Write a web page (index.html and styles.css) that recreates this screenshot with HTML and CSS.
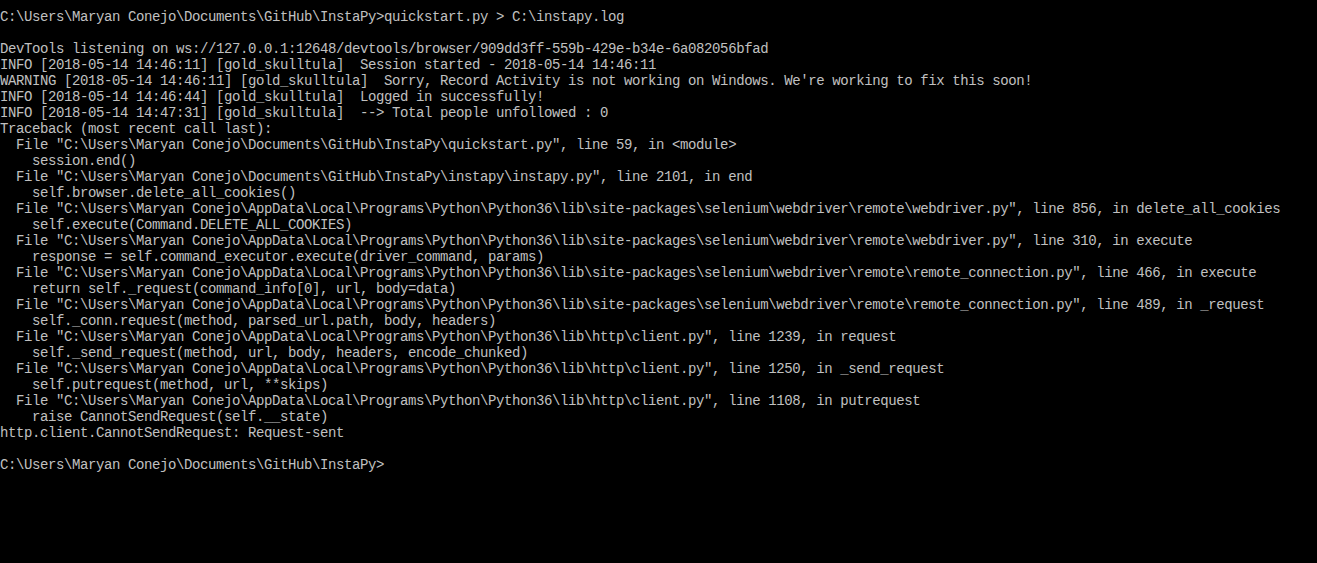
FILE: index.html
```html
<!DOCTYPE html>
<html>
<head>
<meta charset="utf-8">
<link rel="stylesheet" href="styles.css">
</head>
<body>
<pre class="console">C:\Users\Maryan Conejo\Documents\GitHub\InstaPy>quickstart.py > C:\instapy.log

DevTools listening on ws://127.0.0.1:12648/devtools/browser/909dd3ff-559b-429e-b34e-6a082056bfad
INFO [2018-05-14 14:46:11] [gold_skulltula]  Session started - 2018-05-14 14:46:11
WARNING [2018-05-14 14:46:11] [gold_skulltula]  Sorry, Record Activity is not working on Windows. We're working to fix this soon!
INFO [2018-05-14 14:46:44] [gold_skulltula]  Logged in successfully!
INFO [2018-05-14 14:47:31] [gold_skulltula]  --> Total people unfollowed : 0
Traceback (most recent call last):
  File "C:\Users\Maryan Conejo\Documents\GitHub\InstaPy\quickstart.py", line 59, in &lt;module&gt;
    session.end()
  File "C:\Users\Maryan Conejo\Documents\GitHub\InstaPy\instapy\instapy.py", line 2101, in end
    self.browser.delete_all_cookies()
  File "C:\Users\Maryan Conejo\AppData\Local\Programs\Python\Python36\lib\site-packages\selenium\webdriver\remote\webdriver.py", line 856, in delete_all_cookies
    self.execute(Command.DELETE_ALL_COOKIES)
  File "C:\Users\Maryan Conejo\AppData\Local\Programs\Python\Python36\lib\site-packages\selenium\webdriver\remote\webdriver.py", line 310, in execute
    response = self.command_executor.execute(driver_command, params)
  File "C:\Users\Maryan Conejo\AppData\Local\Programs\Python\Python36\lib\site-packages\selenium\webdriver\remote\remote_connection.py", line 466, in execute
    return self._request(command_info[0], url, body=data)
  File "C:\Users\Maryan Conejo\AppData\Local\Programs\Python\Python36\lib\site-packages\selenium\webdriver\remote\remote_connection.py", line 489, in _request
    self._conn.request(method, parsed_url.path, body, headers)
  File "C:\Users\Maryan Conejo\AppData\Local\Programs\Python\Python36\lib\http\client.py", line 1239, in request
    self._send_request(method, url, body, headers, encode_chunked)
  File "C:\Users\Maryan Conejo\AppData\Local\Programs\Python\Python36\lib\http\client.py", line 1250, in _send_request
    self.putrequest(method, url, **skips)
  File "C:\Users\Maryan Conejo\AppData\Local\Programs\Python\Python36\lib\http\client.py", line 1108, in putrequest
    raise CannotSendRequest(self.__state)
http.client.CannotSendRequest: Request-sent

C:\Users\Maryan Conejo\Documents\GitHub\InstaPy></pre>
</body>
</html>
```
FILE: styles.css
```css
html, body {
  margin: 0;
  padding: 0;
  background: #000000;
  height: 100%;
  overflow: hidden;
}
.console {
  margin: 0;
  padding: 9px 0 0 0;
  color: #c0c0c0;
  font-family: "Liberation Mono", "DejaVu Sans Mono", monospace;
  font-size: 14px;
  letter-spacing: -0.4px;
  line-height: 16px;
  white-space: pre;
}
```
